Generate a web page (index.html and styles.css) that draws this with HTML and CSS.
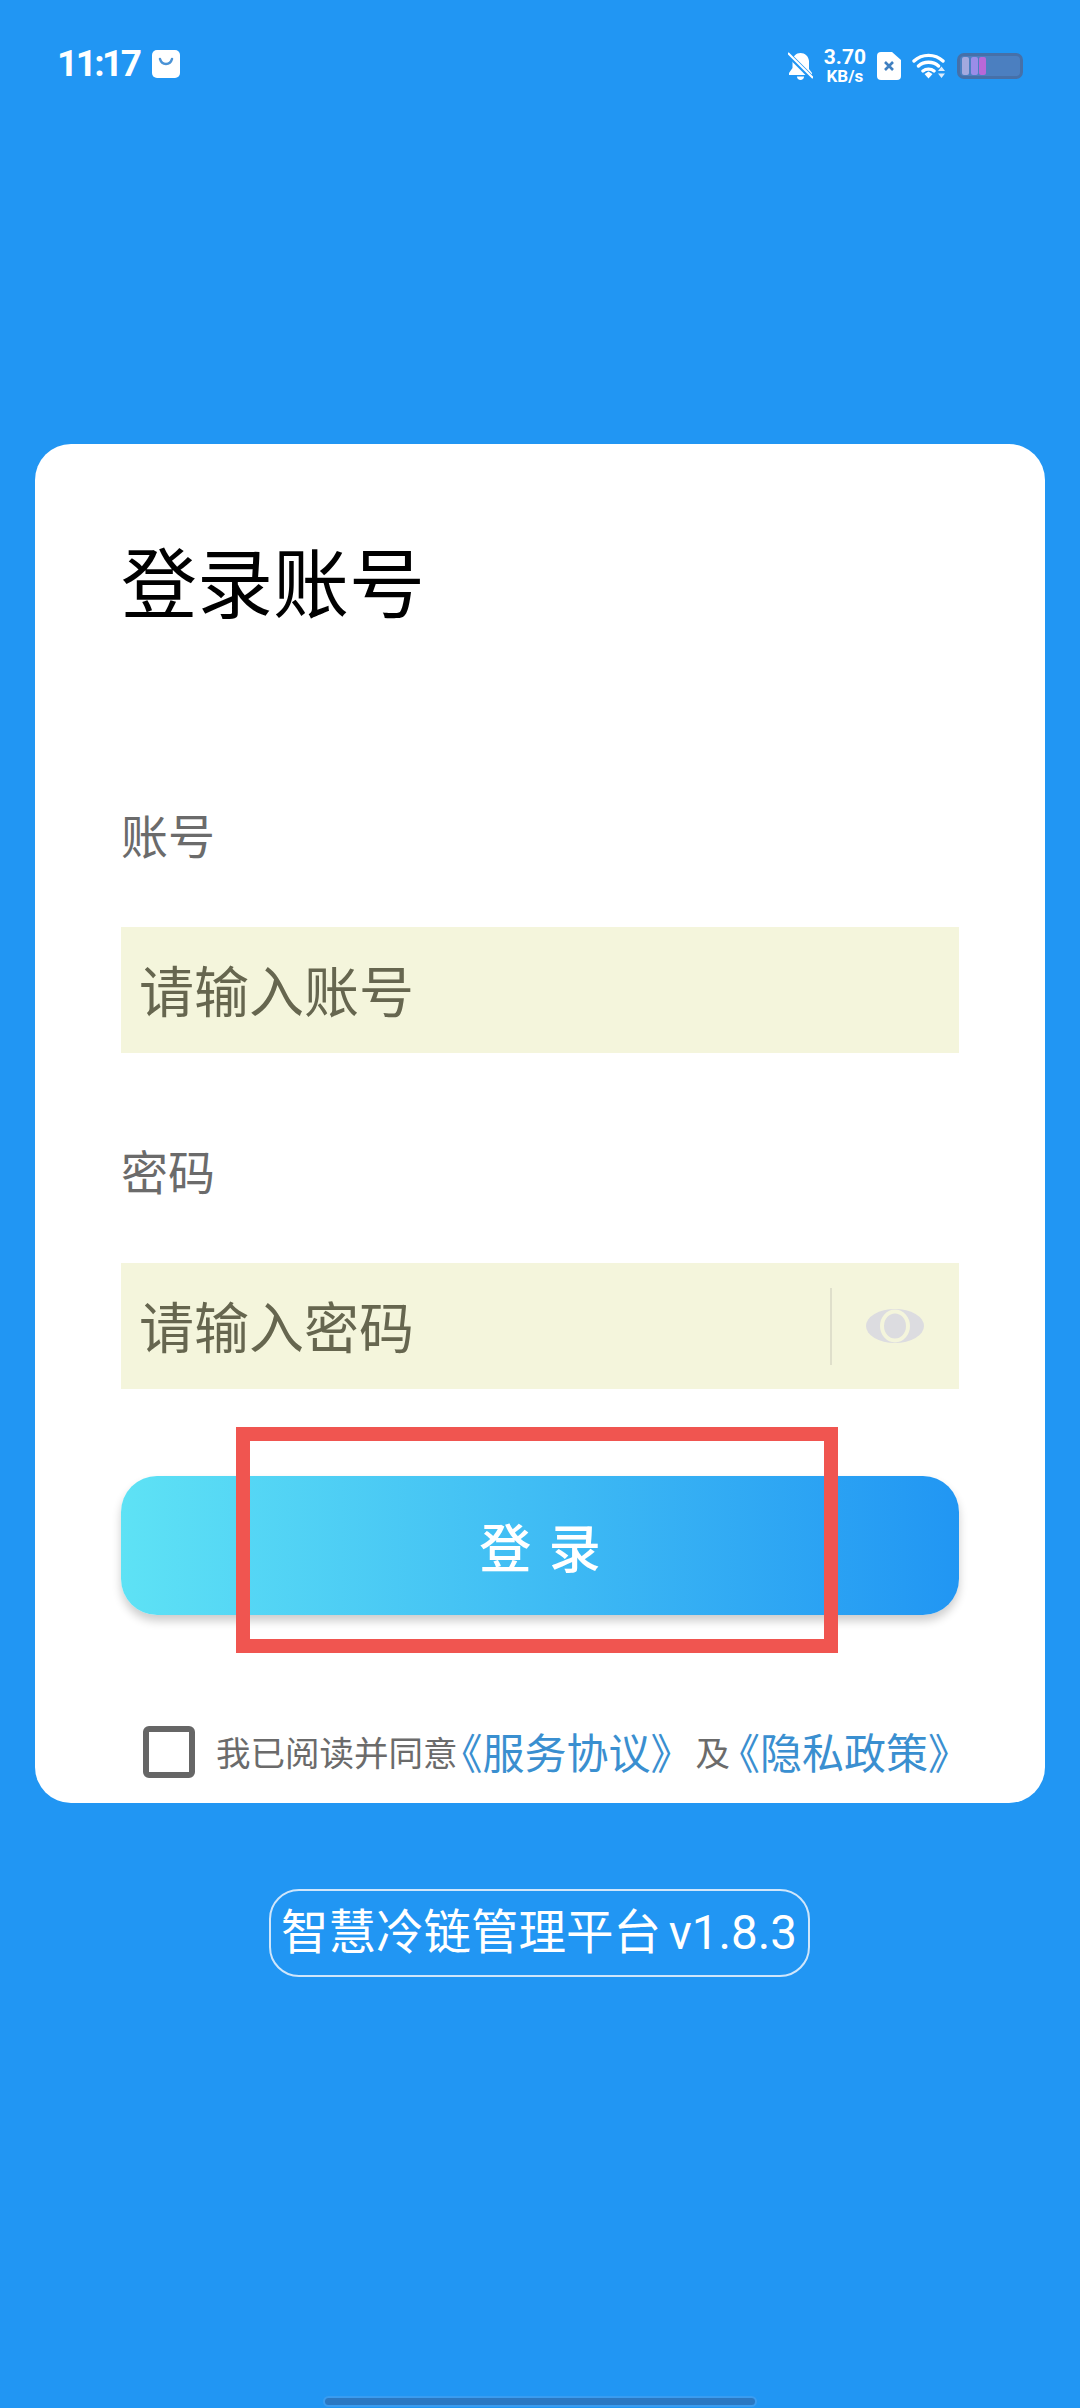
FILE: index.html
```html
<!DOCTYPE html>
<html>
<head>
<meta charset="UTF-8">
<title>登录账号</title>
<link rel="stylesheet" href="styles.css">
</head>
<body>
	<div class="status-bar">
		<div class="status-left">
			<span class="time">11:17</span>
			<svg class="bag-icon" width="28" height="28" viewBox="0 0 28 28">
				<rect x="0" y="0" width="28" height="28" rx="5" fill="#fff"/>
				<path d="M8 9c1 3.5 3 5 6 5s5-1.500 6-5" fill="none" stroke="#4a93d6" stroke-width="2.5" stroke-linecap="round"/>
			</svg>
		</div>
		<div class="status-right">
			<svg width="25" height="28" viewBox="0 0 25 28">
				<path d="M12.5 1C8 1 5 4 4.5 9v7L1 21v2h23v-2l-3-4V9C20.5 4 17 1 12.5 1z" fill="#fff"/>
				<path d="M9 24.5c0 2 1.5 3.5 3.5 3.5s3.5-1.5 3.5-3.5z" fill="#fff"/>
				<path d="M-1 1l26 26" stroke="#2196f3" stroke-width="5"/>
				<path d="M0 1l25 25" stroke="#fff" stroke-width="2"/>
			</svg>
			<div class="speed"><span>3.70</span><span class="speed-unit">KB/s</span></div>
			<svg width="24" height="28" viewBox="0 0 24 28">
				<path d="M4 0h11l9 8v16a4 4 0 0 1-4 4H4a4 4 0 0 1-4-4V4a4 4 0 0 1 4-4z" fill="#fff"/>
				<path d="M8 10l8 8M16 10l-8 8" stroke="#3f7fc0" stroke-width="2.6"/>
			</svg>
			<svg width="33" height="26" viewBox="0 0 33 26">
				<path d="M2 8c8-7.5 21-7.5 29 0M6.5 13c5.5-5 14.5-5 20 0M11 18c3-2.5 8-2.5 11 0" fill="none" stroke="#fff" stroke-width="3.4" stroke-linecap="round"/>
				<path d="M12.5 21l4-2.500 4 2.500-4 4.500z" fill="#fff"/>
				<path d="M26 18l3.500-4.500 3.500 4.500zM26 20.500l3.500 4.500 3.500-4.500z" fill="#dcecfb"/>
			</svg>
			<div class="battery">
				<span class="cell cell-1"></span><span class="cell cell-2"></span><span class="cell cell-3"></span>
			</div>
		</div>
	</div>

	<div class="card">
		<h1 class="title">登录账号</h1>
		<div class="label first">账号</div>
		<div class="input">
			<span class="placeholder">请输入账号</span>
		</div>
		<div class="label">密码</div>
		<div class="input">
			<span class="placeholder">请输入密码</span>
			<span class="divider"></span>
			<svg class="eye" width="58" height="34" viewBox="0 0 58 34">
				<ellipse cx="29" cy="17" rx="29" ry="17" fill="#dcdce0"/>
				<ellipse cx="29" cy="17" rx="13" ry="14.5" fill="none" stroke="#f4f5dc" stroke-width="4"/>
			</svg>
		</div>
		<div class="button-wrap">
			<button class="login-btn">登 录</button>
			<div class="highlight"></div>
		</div>
		<div class="agree">
			<span class="checkbox"></span>
			<span>我已阅读并同意</span><a class="link link-first">《服务协议》</a><span class="agree-and">及</span><a class="link link-second">《隐私政策》</a>
		</div>
	</div>

	<div class="version-wrap">
		<div class="version">智慧冷链管理平台 v1.8.3</div>
	</div>

	<div class="home-bar"></div>
</body>
</html>
```

FILE: styles.css
```css
* {
    margin: 0;
    padding: 0;
    box-sizing: border-box;
}

body {
    width: 1080px;
    height: 2408px;
    background-color: #2196f3;
    font-family: 'Noto Sans CJK SC', 'Noto Sans', sans-serif;
    position: relative;
    overflow: hidden;
}

.status-bar {
    height: 124px;
    padding: 44px 57px 0 57px;
    display: flex;
    justify-content: space-between;
    align-items: flex-start;
    color: #fff;
}

.status-left {
    display: flex;
    align-items: center;
    gap: 13px;
}

.time {
    font-family: 'Roboto', sans-serif;
    font-size: 37px;
    font-weight: 700;
    line-height: 40px;
    letter-spacing: -2.6px;
}

.status-right {
    display: flex;
    align-items: center;
    gap: 11px;
    margin-top: 3px;
}

.speed {
    display: flex;
    flex-direction: column;
    align-items: center;
    font-family: 'Roboto', sans-serif;
    font-size: 21px;
    font-weight: 700;
    line-height: 20px;
}

.speed-unit {
    font-size: 17px;
    line-height: 18px;
}

.battery {
    width: 66px;
    height: 26px;
    margin-left: 1px;
    padding: 1px 2px;
    display: flex;
    gap: 1.5px;
    background-color: #4b7fc0;
    border: 3px solid #4670a8;
    border-radius: 7px;
}

.cell {
    width: 7px;
    border-radius: 2px;
}

.cell-1 { background-color: #a3a9df; }
.cell-2 { background-color: #9a8de8; }
.cell-3 { background-color: #b868d8; }

.card {
    width: 1010px;
    height: 1359px;
    margin: 320px 0 0 35px;
    padding: 0 86px;
    background-color: #fff;
    border-radius: 36px;
}

.title {
    padding-top: 85px;
    font-size: 76px;
    font-weight: 400;
    line-height: 100px;
    color: #000;
}

.label {
    font-size: 47px;
    line-height: 64px;
    color: #6b6b6b;
    margin-top: 85px;
    margin-bottom: 61px;
}

.label.first {
    margin-top: 173px;
}

.input {
    width: 838px;
    height: 126px;
    padding-left: 18px;
    display: flex;
    align-items: center;
    background-color: #f4f5dc;
    font-size: 55px;
    color: #66664f;
}

.placeholder {
    flex: 1;
    margin-bottom: 4px;
}

.divider {
    width: 2px;
    height: 77px;
    background-color: #dfdfcb;
}

.eye {
    margin: 0 35px 0 34px;
}

.button-wrap {
    position: relative;
    margin-top: 87px;
}

.login-btn {
    display: block;
    width: 838px;
    height: 139px;
    border: none;
    border-radius: 36px;
    background: linear-gradient(90deg, #5ee2f5, #2196f3);
    box-shadow: 0 6px 10px rgba(0, 0, 0, 0.2);
    color: #fff;
    font-family: inherit;
    font-size: 52px;
    font-weight: 500;
    word-spacing: 6px;
}

.highlight {
    position: absolute;
    left: 115px;
    top: -49px;
    width: 602px;
    height: 226px;
    border: 14px solid #f05550;
}

.agree {
    display: flex;
    align-items: center;
    margin-top: 105px;
    margin-left: 22px;
    font-size: 34.5px;
    color: #6b6b6b;
}

.agree span:not(.checkbox),
.link {
    margin-bottom: 3px;
}

.checkbox {
    width: 52px;
    height: 52px;
    margin-right: 21px;
    border: 6px solid #666;
    border-radius: 6px;
}

.link {
    font-size: 42px;
    color: #3a8fd0;
    font-feature-settings: "halt";
}

.link-first {
    margin-left: 4px;
}

.link-second {
    margin-left: 9px;
}

.agree-and {
    margin-left: 24px;
}

.version-wrap {
    display: flex;
    justify-content: center;
    margin-top: 86px;
    padding-right: 2px;
}

.version {
    width: 541px;
    height: 88px;
    border: 2px solid #cfe6fb;
    border-radius: 30px;
    text-align: center;
    color: #fff;
    font-family: 'Roboto', 'Noto Sans CJK SC', sans-serif;
    font-size: 47.5px;
    line-height: 84px;
    white-space: nowrap;
    word-spacing: -4px;
}

.home-bar {
    position: absolute;
    left: 325px;
    bottom: 3px;
    width: 430px;
    height: 7px;
    background-color: #2b78c2;
    border-radius: 4px;
    box-shadow: 0 0 0 2px #3a9cf0;
}
```
